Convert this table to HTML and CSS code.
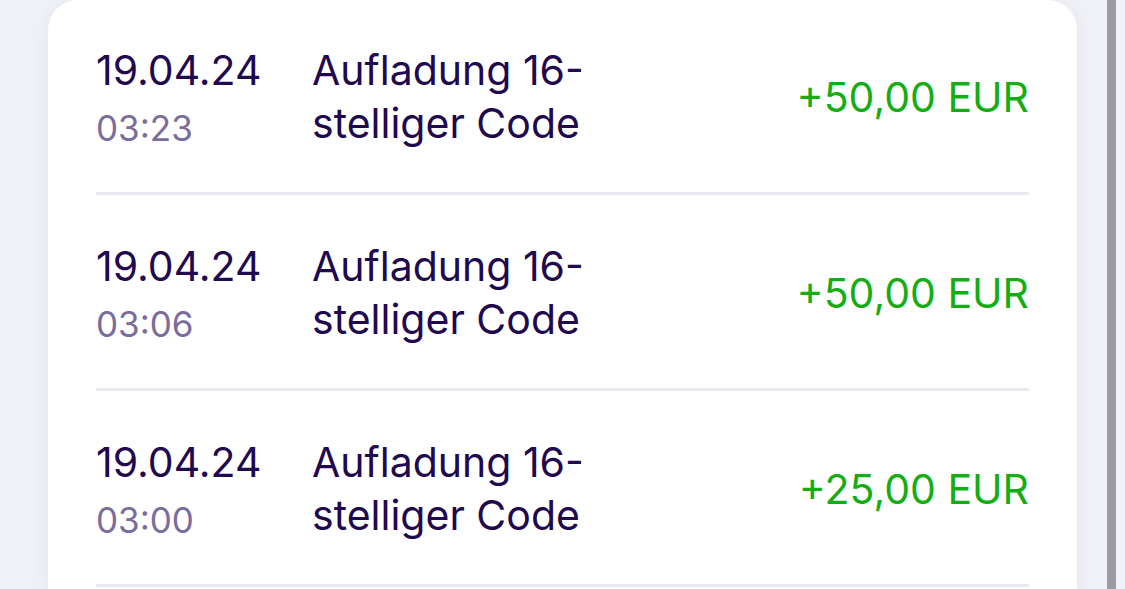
FILE: index.html
```html
<!DOCTYPE html>
<html lang="de">
<head>
<meta charset="UTF-8">
<meta name="viewport" content="width=device-width, initial-scale=1.0">
<title>Transaktionen</title>
<link rel="stylesheet" href="styles.css">
</head>
<body>
    <div class="page">
        <div class="card">
            <div class="row">
                <div class="when">
                    <div class="date">19.04.24</div>
                    <div class="time">03:23</div>
                </div>
                <div class="desc">Aufladung 16-<br>stelliger Code</div>
                <div class="amount">+50,00 EUR</div>
            </div>
            <div class="row">
                <div class="when">
                    <div class="date">19.04.24</div>
                    <div class="time">03:06</div>
                </div>
                <div class="desc">Aufladung 16-<br>stelliger Code</div>
                <div class="amount">+50,00 EUR</div>
            </div>
            <div class="row">
                <div class="when">
                    <div class="date">19.04.24</div>
                    <div class="time">03:00</div>
                </div>
                <div class="desc">Aufladung 16-<br>stelliger Code</div>
                <div class="amount">+25,00 EUR</div>
            </div>
        </div>
        <div class="scrollbar"></div>
    </div>
</body>
</html>
```

FILE: styles.css
```css
body {
    margin: 0;
    padding: 0;
    font-family: Inter, "Noto Sans", sans-serif;
    background-color: #f1f2f7;
    overflow: hidden;
}
.page {
    display: flex;
    align-items: flex-start;
    height: 589px;
}
.card {
    margin-left: 48px;
    width: 933px;
    padding: 0 48px;
    background-color: #fff;
    border-radius: 30px 30px 0 0;
    box-shadow: 0 0 24px rgba(40, 40, 110, 0.05);
    height: 600px;
}
.row {
    display: flex;
    align-items: center;
    height: 190px;
    padding-top: 2px;
    border-bottom: 3px solid #e9e9f0;
}
.row + .row {
    height: 191px;
}
.when {
    width: 216px;
    flex-shrink: 0;
}
.date {
    font-size: 41px;
    line-height: 52px;
    color: #21094f;
}
.time {
    margin-top: 10px;
    font-size: 35px;
    line-height: 44px;
    color: #7b6c9e;
}
.desc {
    flex: 1;
    font-size: 41px;
    line-height: 53px;
    color: #21094f;
}
.amount {
    font-size: 41px;
    color: #14ad14;
    text-align: right;
}
.scrollbar {
    margin-left: 30px;
    width: 9px;
    height: 589px;
    background-color: #9b9ba1;
}
```
